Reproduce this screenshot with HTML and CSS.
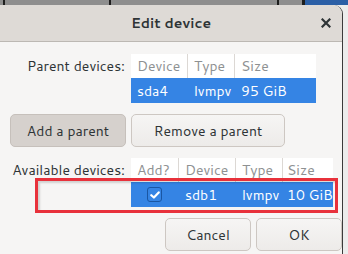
FILE: index.html
```html
<!DOCTYPE html>
<html lang="en">
<head>
  <meta charset="UTF-8">
  <title>Edit device</title>
  <link rel="stylesheet" href="styles.css">
</head>
<body>

<div class="backdrop"></div>

<div class="dialog">
  <div class="titlebar">
    <span class="title">Edit device</span>
    <svg class="close" width="10" height="10" viewBox="0 0 10 10"><path d="M1.5 1.5 L8.5 8.5 M8.5 1.5 L1.5 8.5" stroke="#2e3436" stroke-width="2.2" stroke-linecap="square"/></svg>
  </div>

  <div class="content">
    <div class="field">
      <div class="label">Parent devices:</div>
      <div class="tree parents">
        <div class="tr head">
          <div class="c dev">Device</div>
          <div class="c type">Type</div>
          <div class="c size">Size</div>
        </div>
        <div class="tr sel">
          <div class="c dev">sda4</div>
          <div class="c type">lvmpv</div>
          <div class="c size">95 GiB</div>
        </div>
      </div>
    </div>

    <div class="actions">
      <button class="btn active add">Add a parent</button>
      <button class="btn remove">Remove a parent</button>
    </div>

    <div class="field avail-field">
      <div class="label">Available devices:</div>
      <div class="tree avail">
        <div class="tr head">
          <div class="c chk">Add?</div>
          <div class="c dev">Device</div>
          <div class="c type">Type</div>
          <div class="c size">Size</div>
        </div>
        <div class="tr sel">
          <div class="c chk"><span class="checkbox">
            <svg width="10" height="8" viewBox="0 0 10 8"><path d="M1.3 4.2 L3.9 6.5 L8.7 1.4" fill="none" stroke="#fff" stroke-width="2.2" stroke-linecap="round" stroke-linejoin="round"/></svg>
          </span></div>
          <div class="c dev">sdb1</div>
          <div class="c type">lvmpv</div>
          <div class="c size">10 GiB</div>
        </div>
      </div>
      <div class="highlight"></div>
    </div>

    <div class="footer">
      <button class="btn">Cancel</button>
      <button class="btn">OK</button>
    </div>
  </div>
</div>

</body>
</html>
```

FILE: styles.css
```css
body {
  margin: 0;
  width: 348px;
  height: 254px;
  overflow: hidden;
  background: #ececec;
  font-family: Cantarell, 'Noto Sans', sans-serif;
  font-size: 14px;
  color: #2e3436;
  position: relative;
}
.backdrop {
  height: 5px;
  background:
    linear-gradient(90deg, #8e8e8e 0 3px, #1e1e1e 3px 5px, #8e8e8e 5px 109px, #1e1e1e 109px 111px, #8e8e8e 111px 277px, #1e1e1e 277px 279px, #8e8e8e 279px 302px, #1e1e1e 302px 305px, #2b5fa6 305px);
}
.dialog {
  width: 343px;
  background: #f6f5f4;
  border-right: 1px solid #3a3a3a;
  border-top-right-radius: 9px;
  box-sizing: border-box;
  height: 249px;
  overflow: hidden;
}
.titlebar {
  height: 36px;
  background: #dedad6;
  border-bottom: 1px solid #bcb8b3;
  display: flex;
  align-items: center;
  justify-content: center;
  position: relative;
  border-top-right-radius: 9px;
}
.title {
  font-weight: bold;
  font-size: 14px;
  color: #2e3436;
}
.close {
  position: absolute;
  right: 11px;
  top: 13px;
}
.content {
  padding: 12px 0 0 10px;
}
.field {
  display: flex;
  align-items: flex-start;
  position: relative;
}
.label {
  width: 115px;
  text-align: right;
  padding-right: 6px;
  line-height: 24px;
}
.tree {
  background: #fff;
}
.tr {
  display: flex;
  height: 24px;
  align-items: center;
}
.tr.sel {
  height: 25px;
  background: #3584e4;
  color: #fff;
}
.tr.head .c {
  color: #8e9192;
  border-right: 1px solid #dcd8d4;
  height: 24px;
  line-height: 24px;
}
.tr.head .c:last-child {
  border-right: none;
}
.c {
  padding-left: 6px;
  box-sizing: border-box;
  white-space: nowrap;
}
.parents .dev { width: 57px; }
.parents .type { width: 47px; }
.parents .size { width: 81px; }
.avail .chk { width: 48px; }
.avail .dev { width: 57px; }
.avail .type { width: 47px; }
.avail .size { width: 50px; padding-left: 4px; }
.avail .tr.sel .chk {
  padding-left: 16px;
  display: flex;
  align-items: center;
}
.checkbox {
  width: 15px;
  height: 15px;
  box-sizing: border-box;
  border: 1px solid #1a56a3;
  border-radius: 3px;
  background: #3584e4;
  display: flex;
  align-items: center;
  justify-content: center;
}
.actions {
  display: flex;
  gap: 5px;
  margin-top: 11px;
}
.btn {
  font-family: inherit;
  font-size: 14px;
  color: #2e3436;
  background: linear-gradient(#f6f5f4, #edebe9);
  border: 1px solid #cdc7c2;
  border-radius: 5px;
  height: 33px;
  padding: 0;
}
.btn.active {
  background: #d6d1cd;
  border-color: #c6c0bb;
}
.add { width: 116px; }
.remove { width: 154px; }
.avail-field {
  margin-top: 11px;
}
.highlight {
  position: absolute;
  left: 25px;
  top: 20px;
  width: 303px;
  height: 35px;
  border: 3px solid #e8313b;
  box-sizing: border-box;
  box-shadow: inset 2px 2px 2px rgba(0,0,0,0.15);
}
.footer {
  display: flex;
  justify-content: flex-end;
  gap: 5px;
  margin-top: 11px;
}
.footer .btn {
  width: 86px;
}
```
